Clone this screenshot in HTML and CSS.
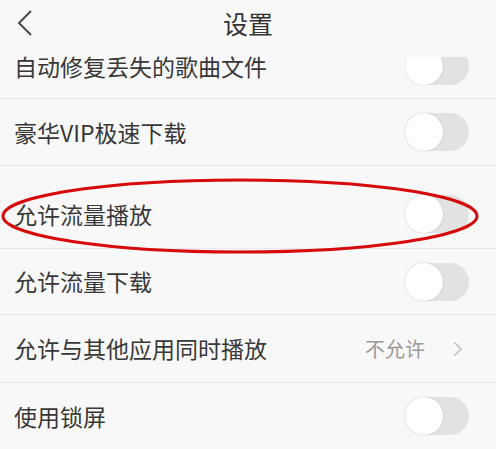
FILE: index.html
```html
<!DOCTYPE html>
<html lang="zh">
<head>
<meta charset="utf-8">
<link rel="stylesheet" href="styles.css">
</head>
<body>
<div class="page">
  <header class="topbar">
    <span class="back">
      <svg width="18" height="28" viewBox="0 0 18 28"><path d="M15 2 L3 14 L15 26" fill="none" stroke="#4a4a4a" stroke-width="2"/></svg>
    </span>
    <h1 class="title">设置</h1>
  </header>
  <div class="list">
    <div class="row r1"><span class="label">自动修复丢失的歌曲文件</span><span class="clip"><span class="toggle"><span class="knob"></span></span></span></div>
    <div class="row r2"><span class="label">豪华VIP极速下载</span><span class="toggle"><span class="knob"></span></span></div>
    <div class="row r3"><span class="label">允许流量播放</span><span class="toggle"><span class="knob"></span></span>
      <svg class="mark" width="484" height="80" viewBox="0 0 484 80"><ellipse cx="240" cy="40" rx="237" ry="36" fill="none" stroke="#d60a0a" stroke-width="3"/></svg>
    </div>
    <div class="row r4"><span class="label">允许流量下载</span><span class="toggle"><span class="knob"></span></span></div>
    <div class="row r5"><span class="label">允许与其他应用同时播放</span><span class="value">不允许<svg class="chev" width="10" height="16" viewBox="0 0 10 16"><path d="M1.5 1.5 L8 8 L1.5 14.5" fill="none" stroke="#bdbdbd" stroke-width="1.5"/></svg></span></div>
    <div class="row r6"><span class="label">使用锁屏</span><span class="toggle"><span class="knob"></span></span></div>
  </div>
</div>
</body>
</html>
```
FILE: styles.css
```css
html, body {
  margin: 0;
  padding: 0;
  background: #f8f8f8;
}
body {
  font-family: "Noto Sans CJK SC", "Noto Sans", sans-serif;
  color: #363636;
}
.page {
  width: 496px;
  height: 449px;
  overflow: hidden;
  display: flex;
  flex-direction: column;
}
.topbar {
  height: 53px;
  flex: none;
  display: flex;
  align-items: center;
  justify-content: center;
  position: relative;
  background: #f8f8f8;
}
.back {
  position: absolute;
  left: 16px;
  top: 9px;
  display: flex;
}
.title {
  margin: 0 0 6px 0;
  font-size: 25px;
  font-weight: 400;
  color: #333;
  line-height: 1;
}
.list {
  flex: none;
}
.row {
  display: flex;
  align-items: center;
  justify-content: space-between;
  padding: 0 27px 0 14px;
  border-bottom: 1px solid #e9e9e9;
  box-sizing: border-box;
  position: relative;
}
.r1 {
  height: 46px;
  align-items: flex-start;
  padding-top: 2px;
}
.r1 .clip {
  display: block;
  height: 28px;
  margin-top: 2px;
  overflow: hidden;
}
.r1 .clip .toggle {
  margin-top: -10px;
}
.r2 { height: 67px; }
.r3 { height: 83px; padding-top: 14px; }
.r4 { height: 66px; }
.r5 { height: 68px; padding-right: 33px; }
.r6 { height: 66px; border-bottom: none; }
.label {
  font-size: 23px;
  line-height: 1;
  color: #383838;
}
.toggle {
  display: block;
  width: 64px;
  height: 38px;
  border-radius: 19px;
  background: #e2e2e2;
  position: relative;
  flex: none;
}
.knob {
  position: absolute;
  left: 0;
  top: 0;
  width: 38px;
  height: 38px;
  border-radius: 50%;
  background: #fff;
  box-shadow: 0 0 2px rgba(0,0,0,0.18);
}
.value {
  display: flex;
  align-items: center;
  gap: 28px;
  font-size: 20px;
  color: #9a9a9a;
  line-height: 1;
}
.chev { display: block; }
.mark {
  position: absolute;
  left: 0;
  top: 10px;
  pointer-events: none;
}
```
